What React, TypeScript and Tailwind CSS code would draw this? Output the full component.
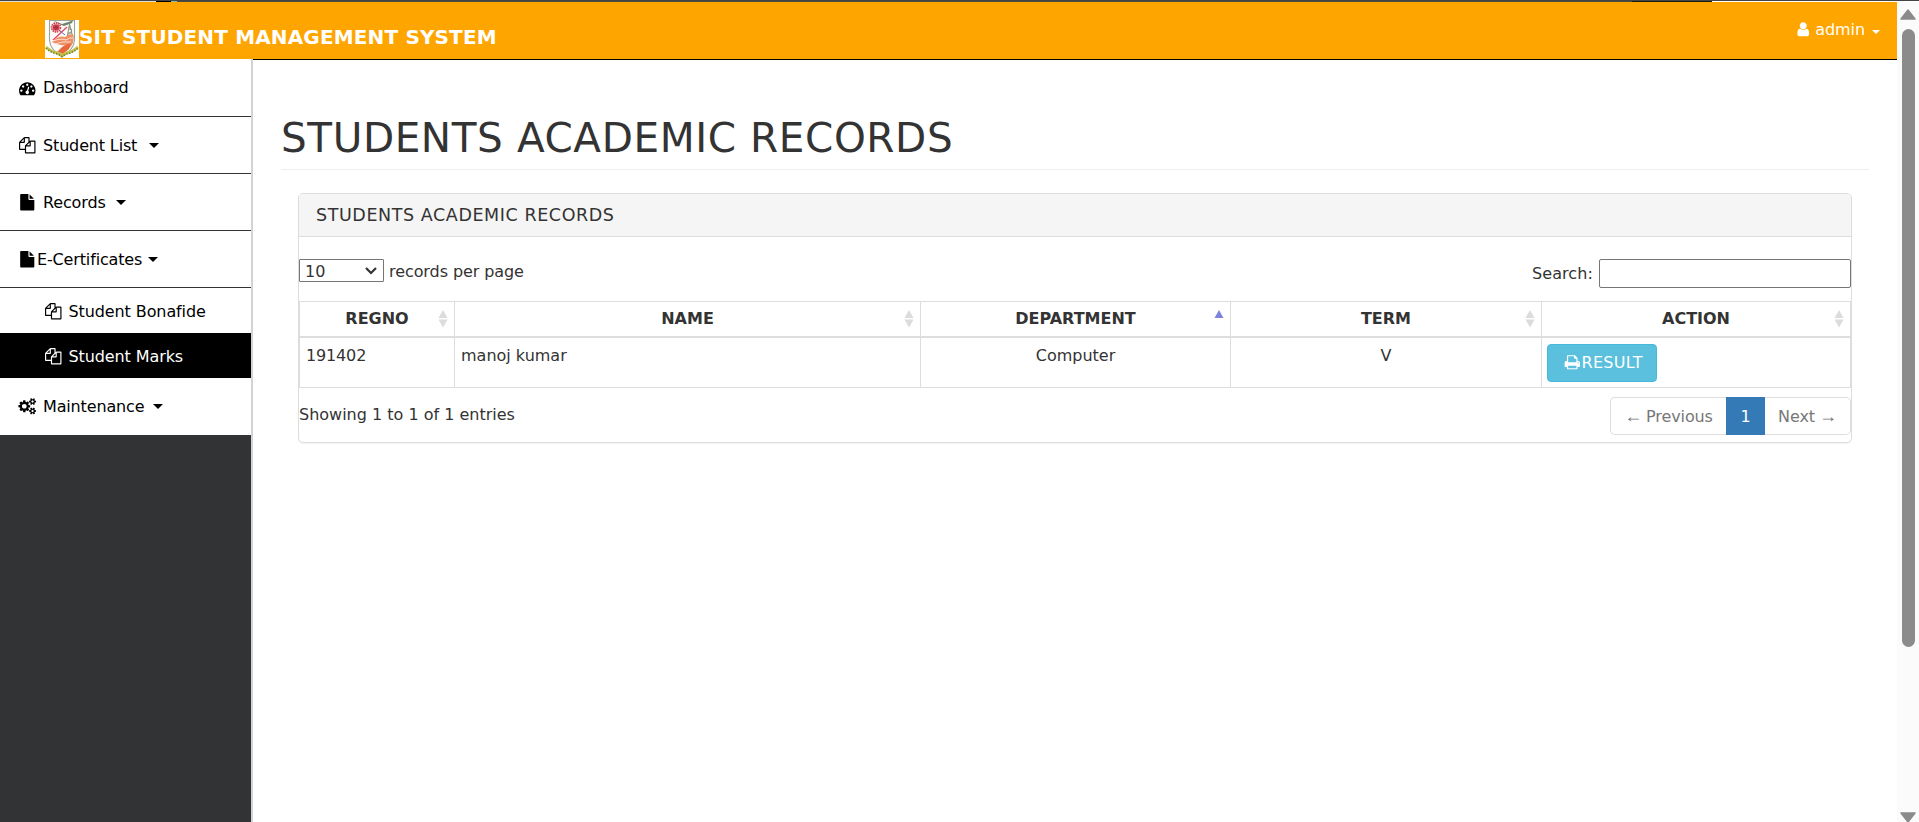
import React from "react";

const ICONS = {
  dashboard:
    "M384 1152q0-53-37.5-90.5t-90.5-37.5-90.5 37.5-37.5 90.5 37.5 90.5 90.5 37.5 90.5-37.5 37.5-90.5zm192-448q0-53-37.5-90.5t-90.5-37.5-90.5 37.5-37.5 90.5 37.5 90.5 90.5 37.5 90.5-37.5 37.5-90.5zm428 481l101-382q6-26-7.5-48.5t-38.5-29.5-48 6.5-30 39.5l-101 382q-60 5-107 43.5t-63 98.5q-20 77 20 146t117 89 146-20 89-117q16-60-6-117t-72-91zm660-33q0-53-37.5-90.5t-90.5-37.5-90.5 37.5-37.5 90.5 37.5 90.5 90.5 37.5 90.5-37.5 37.5-90.5zm-640-640q0-53-37.5-90.5t-90.5-37.5-90.5 37.5-37.5 90.5 37.5 90.5 90.5 37.5 90.5-37.5 37.5-90.5zm448 192q0-53-37.5-90.5t-90.5-37.5-90.5 37.5-37.5 90.5 37.5 90.5 90.5 37.5 90.5-37.5 37.5-90.5zm320 448q0 261-141 483-19 29-54 29h-1402q-35 0-54-29-141-221-141-483 0-182 71-348t191-286 286-191 348-71 348 71 286 191 191 286 71 348z",
  files:
    "M1696 384q40 0 68 28t28 68v1216q0 40-28 68t-68 28h-960q-40 0-68-28t-28-68v-288h-544q-40 0-68-28t-28-68v-672q0-40 20-88t48-76l408-408q28-28 76-48t88-20h416q40 0 68 28t28 68v328q68-40 128-40h416zm-544 213l-299 299h299v-299zm-640-384l-299 299h299v-299zm196 647l316-316v-416h-384v416q0 40-28 68t-68 28h-416v640h512v-256q0-40 20-88t48-76zm956 804v-1152h-384v416q0 40-28 68t-68 28h-416v640h896z",
  file:
    "M1152 512v-472q22 14 36 28l408 408q14 14 28 36h-472zm-128 32q0 40 28 68t68 28h544v1056q0 40-28 68t-68 28h-1344q-40 0-68-28t-28-68v-1600q0-40 28-68t68-28h800v544z",
  user:
    "M1536 1399q0 109-62.5 187t-150.5 78h-854q-88 0-150.5-78t-62.5-187q0-85 8.5-160.5t31.5-152 58.5-131 94-89 134.5-34.5q131 128 313 128t313-128q76 0 134.5 34.5t94 89 58.5 131 31.5 152 8.5 160.5zm-256-887q0 159-112.5 271.5t-271.5 112.5-271.5-112.5-112.5-271.5 112.5-271.5 271.5-112.5 271.5 112.5 112.5 271.5z",
  print:
    "M448 1536h896v-256h-896v256zm0-640h896v-384h-160q-40 0-68-28t-28-68v-160h-640v640zm1152 64q0-26-19-45t-45-19-45 19-19 45 19 45 45 19 45-19 19-45zm128 0v416q0 13-9.5 22.5t-22.5 9.5h-224v160q0 40-28 68t-68 28h-960q-40 0-68-28t-28-68v-160h-224q-13 0-22.5-9.5t-9.5-22.5v-416q0-79 56.5-135.5t135.5-56.5h64v-544q0-40 28-68t68-28h672q40 0 88 20t76 48l152 152q28 28 48 76t20 88v256h64q79 0 135.5 56.5t56.5 135.5z",
  cogs:
    "M832 896q0-106-75-181t-181-75-181 75-75 181 75 181 181 75 181-75 75-181zm768 512q0-52-38-90t-90-38-90 38-38 90q0 53 37.5 90.5t90.5 37.5 90.5-37.5 37.5-90.5zm0-1024q0-52-38-90t-90-38-90 38-38 90q0 53 37.5 90.5t90.5 37.5 90.5-37.5 37.5-90.5zm-384 421v185q0 10-7 19.5t-16 10.5l-155 24q-11 35-32 76 34 48 90 115 7 11 7 20 0 12-7 19-23 30-82.5 89.5t-78.5 59.5q-11 0-21-7l-115-90q-37 19-77 31-11 108-23 155-7 24-30 24h-186q-11 0-20-7.5t-10-17.5l-23-153q-34-10-75-31l-118 89q-7 7-20 7-11 0-21-8-144-133-144-160 0-9 7-19 10-14 41-53t47-61q-23-44-35-82l-152-24q-10-1-17-9.5t-7-19.5v-185q0-10 7-19.5t16-10.5l155-24q11-35 32-76-34-48-90-115-7-11-7-20 0-12 7-20 22-30 82-89t79-59q11 0 21 7l115 90q34-18 77-32 11-108 23-154 7-24 30-24h186q11 0 20 7.5t10 17.5l23 153q34 10 75 31l118-89q8-7 20-7 11 0 21 8 144 133 144 160 0 8-7 19-12 16-42 54t-45 60q23 48 34 82l152 23q10 2 17 10.5t7 19.5zm640 533v140q0 16-149 31-12 27-30 52 51 113 51 138 0 4-4 7-122 71-124 71-8 0-46-47t-52-68q-20 2-30 2t-30-2q-14 21-52 68t-46 47q-2 0-124-71-4-3-4-7 0-25 51-138-18-25-30-52-149-15-149-31v-140q0-16 149-31 13-29 30-52-51-113-51-138 0-4 4-7 4-2 35-20t59-34 30-16q8 0 46 46.5t52 67.5q20-2 30-2t30 2q51-71 92-112l6-2q4 0 124 70 4 3 4 7 0 25-51 138 17 23 30 52 149 15 149 31zm0-1024v140q0 16-149 31-12 27-30 52 51 113 51 138 0 4-4 7-122 71-124 71-8 0-46-47t-52-68q-20 2-30 2t-30-2q-14 21-52 68t-46 47q-2 0-124-71-4-3-4-7 0-25 51-138-18-25-30-52-149-15-149-31v-140q0-16 149-31 13-29 30-52-51-113-51-138 0-4 4-7 4-2 35-20t59-34 30-16q8 0 46 46.5t52 67.5q20-2 30-2t30 2q51-71 92-112l6-2q4 0 124 70 4 3 4 7 0 25-51 138 17 23 30 52 149 15 149 31z",
};

type IconName = keyof typeof ICONS;

function Icon({ name }: { name: IconName }) {
  return (
    <svg
      viewBox="0 0 1792 1792"
      className="mx-[0.5px] h-[16.5px] w-[16.5px] shrink-0 overflow-visible fill-current"
      aria-hidden="true"
    >
      <path d={ICONS[name]} />
    </svg>
  );
}

function Caret({ className = "h-[5px] w-[10px]" }: { className?: string }) {
  return (
    <svg viewBox="0 0 10 5" className={`shrink-0 fill-current ${className}`} aria-hidden="true">
      <path d="M0 0H10L5 5Z" />
    </svg>
  );
}

function Logo() {
  return (
    <svg viewBox="0 0 34 38" className="mt-[18px] h-[38px] w-[34px] shrink-0" aria-hidden="true">
      <rect width="34" height="38" fill="#fff" />
      <path d="M4.5 0.5H29.5V20Q29 30 17 36Q5 30 4.5 20Z" fill="#fdfcfa" stroke="#98a595" strokeWidth="1.1" />
      <path d="M8 0.5L17 4L28 0.5L27 3L19 6L14 4Z" fill="#6d8268" />
      <circle cx="11" cy="7.5" r="4.4" fill="none" stroke="#d5424c" strokeWidth="1.8" strokeDasharray="1.5 0.7" />
      <circle cx="11" cy="7.5" r="3.3" fill="#cc3949" />
      <path d="M9 7.5h4M11 5.5v4" stroke="#8a3440" strokeWidth="0.8" />
      <path d="M24.5 4L22 18M24.5 4L28 18M23.5 9h3M23 13h4M24 6L27 11L22.5 15" stroke="#87937d" strokeWidth="1" fill="none" />
      <path d="M8 20L22 7" stroke="#ea405d" strokeWidth="1.3" />
      <path d="M15 11L20 15" stroke="#6a65bd" strokeWidth="1" />
      <path d="M7 22Q14 15 20 17Q25 13 28.5 15V20Q28 27 20 31L14 32Q15 28 20 25Q13 26 7 22Z" fill="#ee8f66" />
      <path d="M8 21Q16 18 21 20Q25 17 28 18M10 24Q17 21 26 22" stroke="#fff1e7" strokeWidth="0.8" fill="none" />
      <path d="M12 32Q17 26 26 23L24 29L18 34Z" fill="#e8683c" />
      <path d="M1 27Q6 32 13 33L17 36L21 33Q28 32 33 27" stroke="#c1c44c" strokeWidth="3" fill="none" />
      <path d="M1 28Q6 33 13 34L17 36.5L21 34Q28 33 33 28" stroke="#78803c" strokeWidth="1.6" strokeDasharray="1.4 1.5" fill="none" />
    </svg>
  );
}

function NavItem({
  icon,
  label,
  labelClass,
  caretClass,
  last = false,
}: {
  icon: IconName;
  label: string;
  labelClass: string;
  caretClass?: string;
  last?: boolean;
}) {
  return (
    <a
      className={`flex h-[57px] items-center bg-white pl-[18.5px] text-black ${last ? "" : "border-b border-[#333]"}`}
    >
      <Icon name={icon} />
      <span className={`tracking-[-0.15px] ${labelClass}`}>{label}</span>
      {caretClass && <Caret className={caretClass} />}
    </a>
  );
}

function SubItem({ label, active = false }: { label: string; active?: boolean }) {
  return (
    <a className={`flex h-[45px] items-center pt-px pl-[44px] ${active ? "bg-black text-white" : "bg-white text-black"}`}>
      <Icon name="files" />
      <span className="ml-[7px] tracking-[-0.1px]">{label}</span>
    </a>
  );
}

function SortIcon({ asc = false }: { asc?: boolean }) {
  return (
    <svg viewBox="0 0 10 18" className="absolute top-[8px] right-[6px] h-[18px] w-[10px]" aria-hidden="true">
      <path d="M0.5 8L5 0L9.5 8Z" fill={asc ? "#7b83dd" : "#dcdcdc"} />
      {!asc && <path d="M0.5 9.5H9.5L5 17.5Z" fill="#dcdcdc" />}
    </svg>
  );
}

const COLUMNS = [
  { title: "REGNO", asc: false },
  { title: "NAME", asc: false },
  { title: "DEPARTMENT", asc: true },
  { title: "TERM", asc: false },
  { title: "ACTION", asc: false },
];

export default function App() {
  return (
    <div className="flex h-[822px] w-[1919px] flex-col overflow-hidden bg-white text-[16px] leading-[25px] text-[#333] [font-family:Verdana,'DejaVu_Sans',sans-serif]">
      <div className="flex h-[2px] shrink-0 flex-col">
        <div className="h-px bg-[#444]" />
        <div className="flex h-px">
          <div className="w-[156px] bg-[#ddd]" />
          <div className="w-[15px] bg-black" />
          <div className="w-[6px] bg-[#7bc0a5]" />
          <div className="w-[1455px] bg-[#4b4a43]" />
          <div className="w-[80px] bg-[#221b10]" />
          <div className="flex-1 bg-white" />
        </div>
      </div>

      <div className="flex min-h-0 flex-1">
        <div className="flex w-[1897px] flex-col">
          <header className="flex h-[57px] shrink-0 justify-between bg-[#ffa500] pl-[45px] text-white">
            <div className="flex">
              <Logo />
              <span className="mt-[21px] text-[20px] leading-[28px] font-bold tracking-[0.15px] whitespace-nowrap">
                SIT STUDENT MANAGEMENT SYSTEM
              </span>
            </div>
            <div className="mt-[15px] flex h-[25px] items-center pr-[17px]">
              <Icon name="user" />
              <span className="ml-[3px] tracking-[-0.1px]">admin</span>
              <Caret className="mt-[4px] ml-[7px] h-[4px] w-[8px]" />
            </div>
          </header>

          <div className="flex min-h-0 flex-1">
            <aside className="w-[253px] shrink-0 border-r-2 border-[#d3d3d3] bg-[#323335]">
              <nav className="flex flex-col">
                <div className="h-px bg-white" />
                <NavItem icon="dashboard" label="Dashboard" labelClass="ml-[7px] pb-px" />
                <NavItem icon="files" label="Student List" labelClass="ml-[7px]" caretClass="ml-[12px] h-[5px] w-[10px]" />
                <NavItem icon="file" label="Records" labelClass="ml-[7px]" caretClass="ml-[10px] h-[5px] w-[10px]" />
                <NavItem icon="file" label="E-Certificates" labelClass="ml-[1px]" caretClass="ml-[6px] h-[5px] w-[10px]" />
                <SubItem label="Student Bonafide" />
                <SubItem label="Student Marks" active />
                <NavItem
                  icon="cogs"
                  label="Maintenance"
                  labelClass="ml-[7px] w-[101px]"
                  caretClass="ml-[9px] h-[5px] w-[10px]"
                  last
                />
              </nav>
            </aside>

            <main className="flex-1 border-t border-black px-[28px] pt-[50px]">
              <h1 className="h-[60px] border-b border-[#eee] text-[40.5px] leading-[57px] tracking-[0.6px] whitespace-nowrap">
                STUDENTS ACADEMIC RECORDS
              </h1>

              <section className="mx-[17px] mt-[23px] h-[250px] rounded-[5px] border border-[#ddd] shadow-[0_1px_1px_rgba(0,0,0,0.05)]">
                <h3 className="h-[43px] rounded-t-[4px] border-b border-[#ddd] bg-[#f5f5f5] pl-[17px] text-[17.5px] leading-[42px] tracking-[0.58px]">
                  STUDENTS ACADEMIC RECORDS
                </h3>

                <div className="flex h-[64px] justify-between pt-[22px]">
                  <label className="flex h-[23px] items-center">
                    <span className="flex h-[23px] w-[85px] items-center justify-between rounded-[1px] border border-[#767676] pt-px pr-[6px] pl-[5px]">
                      10
                      <svg viewBox="0 0 12 8" className="h-[8px] w-[12px]" fill="none" stroke="#333" strokeWidth="2.2">
                        <path d="M1 1L6 6L11 1" />
                      </svg>
                    </span>
                    <span className="ml-[5px] pt-px tracking-[-0.08px]">records per page</span>
                  </label>
                  <label className="flex h-[29px] items-center">
                    <span className="pb-px tracking-[0.1px]">Search:</span>
                    <input className="ml-[6px] h-[29px] w-[252px] rounded-[2px] border border-[#767676] bg-white" />
                  </label>
                </div>

                <table className="w-full table-fixed border-collapse">
                  <colgroup>
                    <col className="w-[155px]" />
                    <col className="w-[466px]" />
                    <col className="w-[310px]" />
                    <col className="w-[311px]" />
                    <col />
                  </colgroup>
                  <thead>
                    <tr className="h-[35px]">
                      {COLUMNS.map((c) => (
                        <th key={c.title} className="relative border border-b-2 border-[#ddd] p-0 text-center font-bold">
                          {c.title}
                          <SortIcon asc={c.asc} />
                        </th>
                      ))}
                    </tr>
                  </thead>
                  <tbody>
                    <tr className="h-[51px] align-top">
                      <td className="border border-[#ddd] px-[6px] pt-[5px] tracking-[-0.15px]">191402</td>
                      <td className="border border-[#ddd] px-[6px] pt-[5px]">manoj kumar</td>
                      <td className="border border-[#ddd] pt-[5px] text-center">Computer</td>
                      <td className="border border-[#ddd] pt-[5px] text-center">V</td>
                      <td className="border border-[#ddd] px-[5px] pt-[6px]">
                        <button className="flex h-[38px] w-[110px] items-center rounded-[4px] border border-[#46b8da] bg-[#5bc0de] pl-[15px] text-white">
                          <Icon name="print" />
                          <span className="ml-[1px] tracking-[0.3px]">RESULT</span>
                        </button>
                      </td>
                    </tr>
                  </tbody>
                </table>

                <div className="flex justify-between">
                  <p className="mt-[14px]">Showing 1 to 1 of 1 entries</p>
                  <div className="mt-[9px] flex h-[38px] w-[241px] text-[#777]">
                    <a className="flex w-[116px] items-center justify-center rounded-l-[5px] border border-r-0 border-[#ddd] tracking-[-0.1px] whitespace-nowrap">
                      <span className="text-[18px] [font-family:'Liberation_Sans',sans-serif]">←</span>
                      <span className="ml-[4px]">Previous</span>
                    </a>
                    <a className="flex w-[39px] items-center justify-center bg-[#337ab7] text-white">1</a>
                    <a className="flex flex-1 items-center justify-center rounded-r-[5px] border border-l-0 border-[#ddd] tracking-[-0.1px] whitespace-nowrap">
                      <span className="mr-[4px]">Next</span>
                      <span className="text-[18px] [font-family:'Liberation_Sans',sans-serif]">→</span>
                    </a>
                  </div>
                </div>
              </section>
            </main>
          </div>
        </div>

        <div className="flex w-[22px] flex-col items-center justify-between bg-[#fbfbfb] pt-[7px]">
          <div className="flex flex-col items-center">
            <svg viewBox="0 0 16 11" className="h-[11px] w-[16px]" aria-hidden="true">
              <path d="M8 1L15 10H1Z" fill="#8b8b8b" stroke="#8b8b8b" strokeWidth="1.5" strokeLinejoin="round" />
            </svg>
            <div className="mt-[9px] h-[618px] w-[13px] rounded-full bg-[#8b8b8b]" />
          </div>
          <svg viewBox="0 0 16 11" className="-mb-px h-[11px] w-[16px]" aria-hidden="true">
            <path d="M8 10L15 1H1Z" fill="#8b8b8b" stroke="#8b8b8b" strokeWidth="1.5" strokeLinejoin="round" />
          </svg>
        </div>
      </div>
    </div>
  );
}
